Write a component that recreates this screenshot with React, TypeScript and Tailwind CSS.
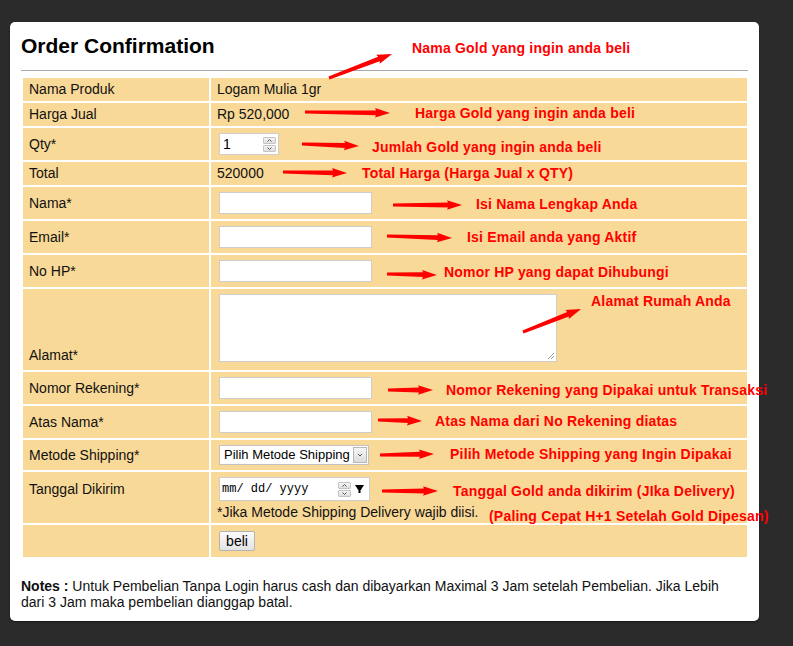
import React from "react";

type ArrowProps = { x1: number; y1: number; x2: number; y2: number };

function Arrow({ x1, y1, x2, y2 }: ArrowProps) {
  const dx = x2 - x1;
  const dy = y2 - y1;
  const len = Math.hypot(dx, dy);
  const ang = (Math.atan2(dy, dx) * 180) / Math.PI;
  const hl = 14;
  const hw = 4.8;
  const pts = `0,-1.5 ${len - hl},-2.4 ${len - hl - 1},-${hw} ${len},0 ${len - hl - 1},${hw} ${len - hl},2.4 0,1.5`;
  return <polygon points={pts} fill="#ff0000" transform={`translate(${x1} ${y1}) rotate(${ang})`} />;
}

function Note({ x, y, children }: { x: number; y: number; children: React.ReactNode }) {
  return (
    <div
      className="absolute whitespace-nowrap text-[14px] leading-[16px] font-bold text-[#ff0000] tracking-[0.2px]"
      style={{ left: x, top: y }}
    >
      {children}
    </div>
  );
}

function Spinner() {
  return (
    <div className="flex flex-col gap-[1px]">
      <div className="w-[13px] h-[7px] bg-gradient-to-b from-[#f4f4f4] to-[#dedede] border border-[#c4c4c4] rounded-[1px] flex items-center justify-center">
        <svg width="5" height="3" viewBox="0 0 5 3"><path d="M0.5 2.5 L2.5 0.5 L4.5 2.5" stroke="#555" strokeWidth="1" fill="none" /></svg>
      </div>
      <div className="w-[13px] h-[7px] bg-gradient-to-b from-[#f4f4f4] to-[#dedede] border border-[#c4c4c4] rounded-[1px] flex items-center justify-center">
        <svg width="5" height="3" viewBox="0 0 5 3"><path d="M0.5 0.5 L2.5 2.5 L4.5 0.5" stroke="#555" strokeWidth="1" fill="none" /></svg>
      </div>
    </div>
  );
}

const labelCls = "bg-[#f9d997] pl-[6px] flex items-center text-[14px] text-[#111]";
const valueCls = "bg-[#f9d997] pl-[8px] flex items-center";

function TextBox() {
  return <div className="w-[153px] h-[22px] bg-white border border-[#cdcdcd]" />;
}

export default function App() {
  return (
    <div className="relative w-full h-[646px] overflow-hidden bg-[#2b2b2b] font-['Liberation_Sans',Arial,sans-serif]">
      <div className="ml-[10px] mt-[22px] w-[749px] h-[599px] bg-white rounded-[5px] px-[11px] pt-[12px] shadow-[0_1px_2px_rgba(0,0,0,0.5)]">
        <h1 className="text-[21px] font-bold leading-[24px] text-black">Order Confirmation</h1>
        <div className="mt-[12px] h-px bg-[#a9a9a9]" />
        <div className="mt-[7px] px-[2px] grid grid-cols-[186px_536px] gap-[2px]">
          <div className={`${labelCls} h-[23px]`}>Nama Produk</div>
          <div className={`${valueCls} h-[23px] !pl-[6px] text-[14px] text-[#111]`}>Logam Mulia 1gr</div>

          <div className={`${labelCls} h-[23px]`}>Harga Jual</div>
          <div className={`${valueCls} h-[23px] !pl-[6px] text-[14px] text-[#111]`}>Rp 520,000</div>

          <div className={`${labelCls} h-[32px]`}>Qty*</div>
          <div className={`${valueCls} h-[32px]`}>
            <div className="w-[60px] h-[22px] bg-white border border-[#cdcdcd] flex items-center justify-between pl-[3px] pr-[2px] text-[14px] text-black">
              <span>1</span>
              <Spinner />
            </div>
          </div>

          <div className={`${labelCls} h-[23px]`}>Total</div>
          <div className={`${valueCls} h-[23px] !pl-[6px] text-[14px] text-[#111]`}>520000</div>

          <div className={`${labelCls} h-[32px]`}>Nama*</div>
          <div className={`${valueCls} h-[32px]`}><TextBox /></div>

          <div className={`${labelCls} h-[32px]`}>Email*</div>
          <div className={`${valueCls} h-[32px]`}><TextBox /></div>

          <div className={`${labelCls} h-[32px]`}>No HP*</div>
          <div className={`${valueCls} h-[32px]`}><TextBox /></div>

          <div className={`${labelCls} h-[81px] !items-end pb-[4px]`}>Alamat*</div>
          <div className={`${valueCls} h-[81px] !items-start pt-[5px]`}>
            <div className="relative w-[338px] h-[68px] bg-white border border-[#cdcdcd]">
              <svg className="absolute right-[1px] bottom-[1px]" width="8" height="8" viewBox="0 0 8 8">
                <path d="M7 1 L1 7 M7 4 L4 7" stroke="#999" strokeWidth="1" />
              </svg>
            </div>
          </div>

          <div className={`${labelCls} h-[32px]`}>Nomor Rekening*</div>
          <div className={`${valueCls} h-[32px]`}><TextBox /></div>

          <div className={`${labelCls} h-[32px]`}>Atas Nama*</div>
          <div className={`${valueCls} h-[32px]`}><TextBox /></div>

          <div className={`${labelCls} h-[30px]`}>Metode Shipping*</div>
          <div className={`${valueCls} h-[30px]`}>
            <div className="w-[150px] h-[20px] bg-white border border-[#c3c3c3] flex items-center justify-between pl-[4px] pr-[1px] text-[13px] text-black">
              <span>Pilih Metode Shipping</span>
              <div className="w-[14px] h-[16px] bg-gradient-to-b from-[#f6f6f6] to-[#dcdcdc] border border-[#b8b8b8] flex items-center justify-center">
                <svg width="6" height="4" viewBox="0 0 6 4"><path d="M1 1 L3 3 L5 1" stroke="#555" strokeWidth="1" fill="none" /></svg>
              </div>
            </div>
          </div>

          <div className={`${labelCls} h-[51px] !items-start pt-[7px]`}>Tanggal Dikirim</div>
          <div className={`${valueCls} h-[51px] !items-start flex-col !pl-[6px] pt-[5px]`}>
            <div className="ml-[2px] w-[151px] h-[24px] bg-white border border-[#cdcdcd] flex items-center pl-[2px] pr-[5px]">
              <span className="font-['Liberation_Mono',monospace] text-[12px] text-black whitespace-pre">mm/ dd/ yyyy</span>
              <div className="ml-auto"><Spinner /></div>
              <svg className="ml-[4px]" width="9" height="8" viewBox="0 0 9 8"><path d="M0 0 H9 L4.5 7 Z" fill="#000" /><rect x="3.5" y="6" width="2" height="2" fill="#000" /></svg>
            </div>
            <div className="mt-[3px] text-[14px] leading-[16px] text-[#111] whitespace-nowrap">*Jika Metode Shipping Delivery wajib diisi.</div>
          </div>

          <div className={`${labelCls} h-[32px]`}></div>
          <div className={`${valueCls} h-[32px]`}>
            <div className="w-[36px] h-[20px] rounded-[2px] border border-[#b3b3b3] bg-gradient-to-b from-[#fbfbfb] to-[#e3e3e3] flex items-center justify-center text-[14px] text-black">beli</div>
          </div>
        </div>

        <div className="mt-[21px] text-[14px] leading-[16px] text-[#111] whitespace-nowrap">
          <span className="font-bold">Notes :</span> Untuk Pembelian Tanpa Login harus cash dan dibayarkan Maximal 3 Jam setelah Pembelian. Jika Lebih
          <br />
          dari 3 Jam maka pembelian dianggap batal.
        </div>
      </div>

      <svg className="absolute left-0 top-0 pointer-events-none" width="793" height="646" viewBox="0 0 793 646">
        <Arrow x1={329} y1={78} x2={392} y2={54} />
        <Arrow x1={305} y1={112} x2={390} y2={113} />
        <Arrow x1={302} y1={144} x2={359} y2={146} />
        <Arrow x1={283} y1={172} x2={347} y2={173} />
        <Arrow x1={393} y1={205} x2={462} y2={205} />
        <Arrow x1={387} y1={236} x2={452} y2={238} />
        <Arrow x1={387} y1={274} x2={437} y2={275} />
        <Arrow x1={523} y1={332} x2={581} y2={309} />
        <Arrow x1={388} y1={390} x2={433} y2={390} />
        <Arrow x1={378} y1={420} x2={422} y2={421} />
        <Arrow x1={380} y1={455} x2={434} y2={454} />
        <Arrow x1={382} y1={491} x2={438} y2={491} />
      </svg>

      <Note x={412} y={40}>Nama Gold yang ingin anda beli</Note>
      <Note x={415} y={105}>Harga Gold yang ingin anda beli</Note>
      <Note x={372} y={139}>Jumlah Gold yang ingin anda beli</Note>
      <Note x={362} y={165}>Total Harga (Harga Jual x QTY)</Note>
      <Note x={476} y={196}>Isi Nama Lengkap Anda</Note>
      <Note x={467} y={229}>Isi Email anda yang Aktif</Note>
      <Note x={444} y={264}>Nomor HP yang dapat Dihubungi</Note>
      <Note x={591} y={293}>Alamat Rumah Anda</Note>
      <Note x={446} y={382}>Nomor Rekening yang Dipakai untuk Transaksi</Note>
      <Note x={435} y={413}>Atas Nama dari No Rekening diatas</Note>
      <Note x={450} y={446}>Pilih Metode Shipping yang Ingin Dipakai</Note>
      <Note x={453} y={483}>Tanggal Gold anda dikirim (JIka Delivery)</Note>
      <Note x={489} y={508}>(Paling Cepat H+1 Setelah Gold Dipesan)</Note>
    </div>
  );
}
